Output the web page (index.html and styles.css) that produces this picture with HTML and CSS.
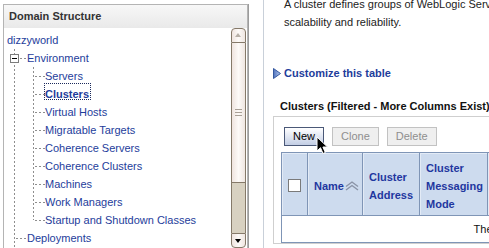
FILE: index.html
```html
<!DOCTYPE html>
<html lang="en">
<head>
    <meta charset="UTF-8">
    <title>Clusters - Summary</title>
    <link rel="stylesheet" href="styles.css">
</head>
<body>
    <div class="page">
        <!-- left: domain tree -->
        <div class="panel">
            <div class="panel-head">Domain Structure</div>
            <div class="panel-body">
                <div class="tree">
                    <a class="node" href="#">dizzyworld</a>
                    <ul class="branch">
                        <li class="open">
                            <span class="toggle"></span>
                            <a href="#">Environment</a>
                            <ul class="leaves">
                                <li><a href="#">Servers</a></li>
                                <li><a href="#" class="current">Clusters</a></li>
                                <li><a href="#">Virtual Hosts</a></li>
                                <li><a href="#">Migratable Targets</a></li>
                                <li><a href="#">Coherence Servers</a></li>
                                <li><a href="#">Coherence Clusters</a></li>
                                <li><a href="#">Machines</a></li>
                                <li><a href="#">Work Managers</a></li>
                                <li><a href="#">Startup and Shutdown Classes</a></li>
                            </ul>
                        </li>
                        <li><a href="#">Deployments</a></li>
                    </ul>
                </div>
                <div class="scrollbar">
                    <div class="sb-up"></div>
                    <div class="sb-thumb"><span class="grip"></span></div>
                    <div class="sb-track"></div>
                    <div class="sb-down"></div>
                </div>
            </div>
        </div>

        <!-- right: clusters summary -->
        <div class="content">
            <p class="desc">A cluster defines groups of WebLogic Server servers that work together to increase<br>scalability and reliability.</p>

            <a class="customize" href="#">
                <svg width="8" height="11" viewBox="0 0 8 11">
                    <defs>
                        <linearGradient id="tri" x1="0" y1="0" x2="1" y2="0">
                            <stop offset="0" stop-color="#4f72bd"/>
                            <stop offset="1" stop-color="#b4c8ec"/>
                        </linearGradient>
                    </defs>
                    <path d="M0.5 0.5 L7.5 5.5 L0.5 10.5 Z" fill="url(#tri)" stroke="#35589f" stroke-width="1"/>
                </svg>
                Customize this table
            </a>

            <div class="table-title">Clusters (Filtered - More Columns Exist)</div>
            <div class="table-box">
                <div class="buttons">
                    <button class="btn">New</button>
                    <button class="btn" disabled>Clone</button>
                    <button class="btn" disabled>Delete</button>
                </div>
                <table class="grid">
                    <colgroup>
                        <col style="width:26px">
                        <col style="width:55px">
                        <col style="width:57px">
                        <col style="width:68px">
                        <col style="width:80px">
                        <col style="width:80px">
                        <col style="width:80px">
                        <col style="width:80px">
                    </colgroup>
                    <tr>
                        <th class="check"><span class="box"></span></th>
                        <th class="name">Name<svg class="sort" width="14" height="10" viewBox="0 0 14 10"><path d="M1 5.5 L7 1 L13 5.5" fill="none" stroke="#8a93a6" stroke-width="1.4"/><path d="M1 9 L7 4.5 L13 9" fill="none" stroke="#8a93a6" stroke-width="1.4"/></svg></th>
                        <th>Cluster Address</th>
                        <th>Cluster Messaging Mode</th>
                        <th>Cluster Broadcast Channel</th>
                        <th>Default Load Algorithm</th>
                        <th>Migration Basis</th>
                        <th>Servers</th>
                    </tr>
                    <tr>
                        <td colspan="8" class="empty">There are no items to display</td>
                    </tr>
                </table>
            </div>
        </div>
    </div>

    <svg class="cursor" width="13" height="19" viewBox="0 0 13 19">
        <path d="M1 1 L1 15 L4.5 11.7 L7 17.5 L9.3 16.5 L6.9 11 L11.5 11 Z" fill="#000" stroke="#fff" stroke-width="1"/>
    </svg>
</body>
</html>
```

FILE: styles.css
```css
body {
    margin: 0;
    font-family: "Liberation Sans", Arial, sans-serif;
    font-size: 11px;
    color: #222;
    background: #fff;
    width: 489px;
    height: 248px;
    overflow: hidden;
    position: relative;
}

.page {
    display: flex;
    align-items: flex-start;
    width: 1000px;
}

a {
    color: #1e3d9b;
    text-decoration: none;
}

/* domain structure panel */

.panel {
    margin: 4px 0 0 3px;
    width: 243px;
    flex: none;
    border: 1px solid #b4b4b4;
    border-bottom: none;
    box-shadow: 1px 0 0 #9c9c9c;
}

.panel-head {
    height: 23px;
    line-height: 23px;
    padding-left: 5px;
    font-weight: bold;
    color: #333;
    background: linear-gradient(#f7f7f7, #e9e9e9);
}

.panel-body {
    display: flex;
    height: 220px;
}

.tree {
    flex: 1;
    padding: 3px 0 0 3px;
    overflow: hidden;
    font-size: 11px;
}

.tree a {
    display: block;
    height: 18px;
    line-height: 18px;
    white-space: nowrap;
}

.branch,
.leaves {
    list-style: none;
    margin: 0;
    padding: 0;
    position: relative;
}

.branch::before,
.leaves::before {
    content: "";
    position: absolute;
    width: 1px;
    background: repeating-linear-gradient(to bottom, #8e8e8e 0 2px, transparent 2px 4px);
}

.branch::before {
    left: 7px;
    top: 0;
    bottom: -40px;
}

.leaves::before {
    left: 26px;
    top: 0;
    bottom: 9px;
}

.branch > li,
.leaves > li {
    position: relative;
}

.branch > li::before,
.leaves > li::before {
    content: "";
    position: absolute;
    top: 9px;
    height: 1px;
    background: repeating-linear-gradient(to right, #8e8e8e 0 2px, transparent 2px 4px);
}

.branch > li::before {
    left: 9px;
    width: 10px;
}

.leaves > li::before {
    left: 28px;
    width: 10px;
}

.branch > li > a {
    padding-left: 20px;
}

.leaves > li > a {
    padding-left: 38px;
}

.toggle {
    position: absolute;
    left: 3px;
    top: 5px;
    width: 7px;
    height: 7px;
    border: 1px solid #7c7c7c;
    background: #fff;
}

.toggle::after {
    content: "";
    position: absolute;
    left: 1px;
    top: 3px;
    width: 5px;
    height: 1px;
    background: #000;
}

.tree a.current {
    font-weight: bold;
    position: relative;
}

.tree a.current::after {
    content: "";
    position: absolute;
    left: 37px;
    top: -2px;
    width: 47px;
    height: 17px;
    box-sizing: border-box;
    border: 1px dotted #1b2a5c;
}

/* scrollbar */

.scrollbar {
    width: 15px;
    margin-right: 1px;
    display: flex;
    flex-direction: column;
}

.sb-up,
.sb-down,
.sb-thumb {
    box-sizing: border-box;
    border: 1px solid #857969;
    background: linear-gradient(to right, #efe4df, #fdfaf8 50%, #efe6e1);
    position: relative;
}

.sb-up {
    height: 15px;
    border-radius: 4px 4px 0 0;
}

.sb-up::after {
    content: "";
    position: absolute;
    left: 3px;
    top: 4px;
    border-left: 3.5px solid transparent;
    border-right: 3.5px solid transparent;
    border-bottom: 4px solid #b8b0a8;
}

.sb-thumb {
    height: 140px;
    border-top: none;
}

.grip {
    position: absolute;
    left: 3px;
    top: 66px;
    width: 7px;
    height: 5px;
    border-top: 1px solid #a9a096;
    border-bottom: 1px solid #a9a096;
}

.grip::after {
    content: "";
    position: absolute;
    left: 0;
    right: 0;
    top: 2px;
    height: 1px;
    background: #a9a096;
}

.sb-track {
    height: 50px;
    background: #d8d1c1;
    border-left: 1px solid #857969;
    border-right: 1px solid #857969;
}

.sb-down {
    height: 15px;
    border-radius: 0 0 4px 4px;
}

.sb-down::after {
    content: "";
    position: absolute;
    left: 3px;
    top: 5px;
    border-left: 3.5px solid transparent;
    border-right: 3.5px solid transparent;
    border-top: 4px solid #000;
}

/* content */

.content {
    margin-left: 15px;
    border-left: 1px solid #c9d0d9;
    padding-left: 9px;
    min-height: 260px;
    flex: 1;
}

.desc {
    margin: -5px 0 0 11px;
    line-height: 18px;
    white-space: nowrap;
    color: #222;
}

.customize {
    display: flex;
    align-items: center;
    gap: 3px;
    margin-top: 33px;
    height: 18px;
    font-weight: bold;
}

.table-title {
    margin-top: 15px;
    padding-left: 7px;
    line-height: 18px;
    font-weight: bold;
    color: #111;
    white-space: nowrap;
}

.table-box {
    margin-top: 1px;
    border: 1px solid #cfcfcf;
    border-right: none;
    padding: 10px 0 0 7px;
}

.buttons {
    display: flex;
    gap: 8px;
    margin-left: 3px;
    margin-bottom: 6px;
}

.btn {
    font-family: "Liberation Sans", Arial, sans-serif;
    font-size: 11px;
    line-height: 13px;
    height: 19px;
    padding: 2px 8px;
    margin: 0;
    border: 1px solid #4a5877;
    background: linear-gradient(#ffffff, #c3cee5);
    color: #000;
}

.btn:disabled {
    border-color: #c2c2c2;
    background: #efefef;
    color: #8e8e8e;
}

.grid {
    border-collapse: collapse;
    table-layout: fixed;
    width: 526px;
}

.grid th {
    height: 63px;
    padding: 5px 6px 2px;
    box-sizing: border-box;
    background: #cddbee;
    border: 1px solid #7f95b6;
    box-shadow: inset 1px 1px 0 #e3ebf6;
    color: #1f379f;
    font-weight: bold;
    text-align: left;
    line-height: 18px;
    vertical-align: middle;
}

.grid th.name {
    white-space: nowrap;
    padding-right: 0;
}

.grid th.check {
    padding: 0;
    text-align: center;
}

.box {
    display: inline-block;
    width: 11px;
    height: 11px;
    border: 1px solid #7a7a7a;
    background: #fff;
    vertical-align: middle;
}

.sort {
    margin-left: 1px;
    vertical-align: -1px;
}

.grid td.empty {
    height: 26px;
    padding: 0;
    border: 1px solid #7f95b6;
    text-align: center;
    color: #111;
}

.cursor {
    position: absolute;
    left: 316px;
    top: 136px;
}
```
